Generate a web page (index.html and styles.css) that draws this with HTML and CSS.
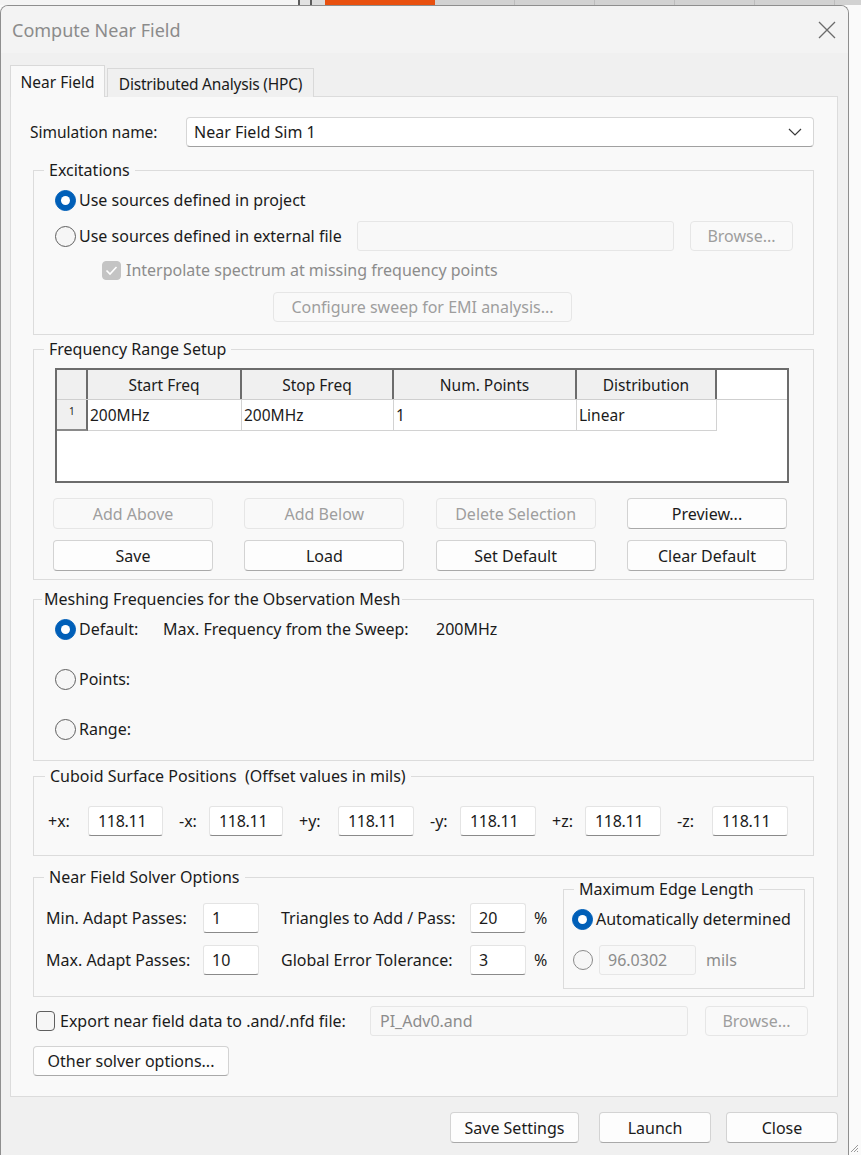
FILE: index.html
```html
<!DOCTYPE html>
<html lang="en">
<head>
    <meta charset="UTF-8">
    <title>Compute Near Field</title>
    <link rel="stylesheet" href="styles.css">
</head>
<body>
    <!-- window behind the dialog -->
    <div class="backdrop">
        <span class="bd bd-light"></span>
        <span class="bd bd-line"></span>
        <span class="bd bd-gap"></span>
        <span class="bd bd-line"></span>
        <span class="bd bd-gap2"></span>
        <span class="bd bd-orange"></span>
        <span class="bd bd-grey"></span>
    </div>

    <div class="dialog">
        <div class="titlebar">
            <span class="title">Compute Near Field</span>
            <svg class="close" width="18" height="18" viewBox="0 0 18 18">
                <path d="M1 1 L17 17 M17 1 L1 17" stroke="#6b6b6b" stroke-width="1.3" fill="none"/>
            </svg>
        </div>

        <div class="client">
            <div class="tabs">
                <div class="tab active">Near Field</div>
                <div class="tab">Distributed Analysis (HPC)</div>
            </div>

            <div class="panel">
                <div class="sim-row">
                    <span class="sim-label">Simulation name:</span>
                    <div class="select">
                        <span>Near Field Sim 1</span>
                        <svg width="14" height="8" viewBox="0 0 14 8">
                            <path d="M1 1 L7 7 L13 1" stroke="#3a3a3a" stroke-width="1.2" fill="none"/>
                        </svg>
                    </div>
                </div>

                <!-- Excitations -->
                <div class="group excitations">
                    <span class="legend">Excitations</span>
                    <div class="row">
                        <span class="radio on"></span>
                        <span>Use sources defined in project</span>
                    </div>
                    <div class="row row-file">
                        <span class="radio"></span>
                        <span class="grow">Use sources defined in external file</span>
                        <span class="field off file-path"></span>
                        <span class="btn off browse">Browse...</span>
                    </div>
                    <div class="row row-check">
                        <span class="check on-off">
                            <svg width="13" height="11" viewBox="0 0 13 11">
                                <path d="M1.5 5.5 L5 9 L11.5 2" stroke="#fff" stroke-width="1.6" fill="none"/>
                            </svg>
                        </span>
                        <span class="dim">Interpolate spectrum at missing frequency points</span>
                    </div>
                    <div class="btn off configure">Configure sweep for EMI analysis...</div>
                </div>

                <!-- Frequency range -->
                <div class="group freq">
                    <span class="legend">Frequency Range Setup</span>
                    <div class="grid">
                        <div class="grid-head">
                            <span class="corner"></span>
                            <span class="hcell">Start Freq</span>
                            <span class="hcell">Stop Freq</span>
                            <span class="hcell">Num. Points</span>
                            <span class="hcell">Distribution</span>
                            <span class="hcell last"></span>
                        </div>
                        <div class="grid-row">
                            <span class="rowhead">1</span>
                            <span class="cell">200MHz</span>
                            <span class="cell">200MHz</span>
                            <span class="cell">1</span>
                            <span class="cell">Linear</span>
                            <span class="cell last"></span>
                        </div>
                    </div>
                    <div class="btn-row">
                        <span class="btn off">Add Above</span>
                        <span class="btn off">Add Below</span>
                        <span class="btn off">Delete Selection</span>
                        <span class="btn">Preview...</span>
                    </div>
                    <div class="btn-row second">
                        <span class="btn">Save</span>
                        <span class="btn">Load</span>
                        <span class="btn">Set Default</span>
                        <span class="btn">Clear Default</span>
                    </div>
                </div>

                <!-- Meshing frequencies -->
                <div class="group meshing">
                    <span class="legend">Meshing Frequencies for the Observation Mesh</span>
                    <div class="row mesh-row">
                        <span class="radio on"></span>
                        <span class="mesh-label">Default:</span>
                        <span class="mesh-desc">Max. Frequency from the Sweep:</span>
                        <span>200MHz</span>
                    </div>
                    <div class="row mesh-row">
                        <span class="radio"></span>
                        <span>Points:</span>
                    </div>
                    <div class="row mesh-row">
                        <span class="radio"></span>
                        <span>Range:</span>
                    </div>
                </div>

                <!-- Cuboid offsets -->
                <div class="group cuboid">
                    <span class="legend">Cuboid Surface Positions&nbsp; (Offset values in mils)</span>
                    <div class="offsets">
                        <span class="off-label">+x:</span><span class="field num">118.11</span>
                        <span class="off-label">-x:</span><span class="field num">118.11</span>
                        <span class="off-label">+y:</span><span class="field num">118.11</span>
                        <span class="off-label">-y:</span><span class="field num">118.11</span>
                        <span class="off-label">+z:</span><span class="field num">118.11</span>
                        <span class="off-label">-z:</span><span class="field num">118.11</span>
                    </div>
                </div>

                <!-- Solver options -->
                <div class="group solver">
                    <span class="legend">Near Field Solver Options</span>
                    <div class="solver-grid">
                        <span>Min. Adapt Passes:</span>
                        <span class="field small">1</span>
                        <span class="mid-label">Triangles to Add / Pass:</span>
                        <span class="field small">20</span>
                        <span class="pct">%</span>

                        <div class="group edge">
                            <span class="legend">Maximum Edge Length</span>
                            <div class="row edge-row">
                                <span class="radio on"></span>
                                <span>Automatically determined</span>
                            </div>
                            <div class="row edge-row2">
                                <span class="radio"></span>
                                <span class="field off edge-val">96.0302</span>
                                <span class="dim mils">mils</span>
                            </div>
                        </div>

                        <span>Max. Adapt Passes:</span>
                        <span class="field small">10</span>
                        <span class="mid-label">Global Error Tolerance:</span>
                        <span class="field small">3</span>
                        <span class="pct">%</span>
                    </div>
                </div>

                <div class="row export-row">
                    <span class="check"></span>
                    <span class="grow">Export near field data to .and/.nfd file:</span>
                    <span class="field off export-path">PI_Adv0.and</span>
                    <span class="btn off browse">Browse...</span>
                </div>

                <div class="btn other">Other solver options...</div>
            </div>

            <div class="footer">
                <span class="btn save-settings">Save Settings</span>
                <span class="btn launch">Launch</span>
                <span class="btn close-btn">Close</span>
            </div>
        </div>
    </div>

    <!-- size grip in the lower right corner -->
    <svg class="grip" width="10" height="10" viewBox="0 0 10 10">
        <path d="M9 2 L2 9 M9 5 L5 9 M9 8 L8 9" stroke="#9a9a9a" stroke-width="1" fill="none"/>
    </svg>
</body>
</html>
```

FILE: styles.css
```css
* {
    box-sizing: border-box;
}
body {
    margin: 0;
    width: 861px;
    height: 1155px;
    overflow: hidden;
    position: relative;
    background-color: #fafafa;
    font-family: "Noto Sans", "Open Sans", sans-serif;
    font-size: 16px;
    color: #1b1b1b;
}

/* strip of the main window peeking above */
.backdrop {
    display: flex;
    height: 5px;
}
.bd-light { width: 298px; background-color: #f4f4f4; }
.bd-line { width: 2px; background-color: #5c5c5c; }
.bd-gap { width: 10px; background-color: #e2e2e2; }
.bd-gap2 { width: 13px; background-color: #dcdcdc; }
.bd-orange { width: 110px; background-color: #e8500f; }
.bd-grey {
    flex: 1;
    background-color: #d2d2d2;
    background-image: repeating-linear-gradient(90deg, transparent 0, transparent 79px, #bdbdbd 79px, #bdbdbd 80px);
}

.dialog {
    width: 849px;
    height: 1150px;
    border: 1px solid #8e8e8e;
    border-bottom: none;
    border-radius: 8px 8px 0 0;
    background-color: #f0f0f0;
    display: flex;
    flex-direction: column;
    overflow: hidden;
}
.titlebar {
    height: 47px;
    flex: none;
    background-color: #f3f3f3;
    display: flex;
    align-items: center;
    justify-content: space-between;
    padding: 0 12px 0 11px;
}
.title {
    font-size: 18px;
    color: #8b8b8b;
}
.grip {
    position: absolute;
    right: 2px;
    bottom: 2px;
}

.client {
    padding: 12px 10px 0 9px;
}
.tabs {
    display: flex;
    align-items: flex-end;
    height: 32px;
    position: relative;
    z-index: 2;
}
.tab {
    display: flex;
    align-items: center;
    justify-content: center;
    border: 1px solid #d9d9d9;
    border-bottom: none;
    font-size: 15.5px;
}
.tab.active {
    width: 95px;
    height: 32px;
    background-color: #f9f9f9;
}
.tab:not(.active) {
    width: 207px;
    height: 29px;
    margin-left: 2px;
    background-color: #f0f0f0;
    padding-top: 2px;
    letter-spacing: -0.2px;
}

.panel {
    height: 1001px;
    margin-top: -1px;
    border: 1px solid #dcdcdc;
    background-color: #f9f9f9;
    padding: 20px 23px 0 22px;
}

.sim-row {
    display: flex;
    align-items: center;
    height: 30px;
}
.sim-label {
    width: 156px;
    margin-left: -3px;
    font-size: 15.5px;
}
.select {
    flex: 1;
    height: 30px;
    display: flex;
    align-items: center;
    justify-content: space-between;
    padding: 0 11px 0 7px;
    background-color: #fff;
    border: 1px solid #d6d6d6;
    border-bottom-color: #a0a0a0;
    border-radius: 4px;
}

/* group boxes */
.group {
    position: relative;
    border: 1px solid #dcdcdc;
}
.legend {
    position: absolute;
    top: -11px;
    left: 10px;
    padding: 0 5px;
    line-height: 20px;
    background-color: #f9f9f9;
    white-space: nowrap;
}
.row {
    display: flex;
    align-items: center;
}
.grow {
    flex: 1;
}
.dim {
    color: #8c8c8c;
}

.radio {
    flex: none;
    width: 21px;
    height: 21px;
    margin-right: 3px;
    border-radius: 50%;
    border: 1px solid #5f5f5f;
    background-color: #f6f6f6;
    position: relative;
}
.radio.on {
    background-color: #005fb8;
    border-color: #005fb8;
}
.radio.on::after {
    content: "";
    position: absolute;
    left: 5px;
    top: 5px;
    width: 9px;
    height: 9px;
    border-radius: 50%;
    background-color: #fff;
}
.check {
    flex: none;
    width: 20px;
    height: 20px;
    margin-right: 5px;
    border: 1px solid #5f5f5f;
    border-radius: 4px;
    background-color: #f6f6f6;
    display: flex;
    align-items: center;
    justify-content: center;
}
.check.on-off {
    width: 19px;
    height: 19px;
    border-color: #c4c4c4;
    background-color: #c4c4c4;
}

.btn {
    height: 30px;
    display: flex;
    align-items: center;
    justify-content: center;
    border: 1px solid #d3d3d3;
    border-bottom-color: #a9a9a9;
    border-radius: 4px;
    background-color: #fdfdfd;
    white-space: nowrap;
}
.btn.off {
    color: #9e9e9e;
    background-color: #f9f9f9;
    border-color: #e6e6e6;
}
.field {
    height: 30px;
    display: flex;
    align-items: center;
    padding-left: 9px;
    background-color: #fff;
    border: 1px solid #e4e4e4;
    border-bottom-color: #8a8a8a;
    border-radius: 3px;
}
.field.off {
    color: #8c8c8c;
    background-color: #f8f8f8;
    border-color: #e6e6e6;
}

/* Excitations */
.excitations {
    margin-top: 23px;
    padding: 14px 20px 12px 21px;
}
.excitations .row {
    height: 30px;
}
.row-file {
    margin-top: 6px;
}
.file-path {
    width: 317px;
}
.browse {
    width: 103px;
    margin-left: 16px;
}
.excitations .row-check {
    height: 24px;
    margin-top: 7px;
    padding-left: 47px;
}
.configure {
    width: 299px;
    margin: 10px 0 0 218px;
}

/* Frequency range table */
.freq {
    margin-top: 14px;
    padding: 18px 24px 8px 21px;
}
.grid {
    height: 115px;
    border: 2px solid #6c6c6c;
    background-color: #fff;
    font-size: 15.5px;
}
.grid-head,
.grid-row {
    display: grid;
    grid-template-columns: 31px 154px 152px 183px 140px 1fr;
}
.grid-head {
    height: 30px;
    background-color: #f0f0f0;
    border-bottom: 1px solid #cfcfcf;
}
.corner {
    border-right: 2px solid #6c6c6c;
}
.hcell {
    display: flex;
    align-items: center;
    justify-content: center;
    border-right: 2px solid #6c6c6c;
}
.hcell.last,
.cell.last {
    border: none;
    background-color: #fff;
}
.grid-row {
    height: 31px;
}
.rowhead {
    background-color: #f0f0f0;
    border-right: 2px solid #6c6c6c;
    border-bottom: 2px solid #8a8a8a;
    font-size: 10px;
    padding: 4px 0 0 12px;
}
.cell {
    display: flex;
    align-items: center;
    padding-left: 2px;
    border-right: 1px solid #d2d2d2;
    border-bottom: 1px solid #d2d2d2;
}
.btn-row {
    display: flex;
    justify-content: space-between;
    margin: 15px 2px 0 -2px;
}
.btn-row.second {
    margin-top: 11px;
}
.btn-row .btn {
    width: 160px;
    height: 31px;
}

/* Meshing frequencies */
.meshing {
    margin-top: 19px;
    height: 162px;
    padding: 17px 0 0 21px;
}
.meshing .legend {
    left: 8px;
    padding: 0 2px;
}
.mesh-row {
    height: 24px;
    margin-bottom: 26px;
}
.mesh-row:nth-of-type(3) {
    margin-bottom: 28px;
}
.mesh-label {
    width: 84px;
}
.mesh-desc {
    width: 273px;
}

/* Cuboid offsets */
.cuboid {
    margin-top: 15px;
    padding: 29px 0 19px 14px;
}
.cuboid .legend {
    left: 11px;
}
.offsets {
    display: grid;
    grid-template-columns: 40px 75px 46px 74px 55px 76px 46px 76px 49px 76px 51px 76px;
    align-items: center;
}
.off-label {
    padding-left: 16px;
}
.off-label:first-child {
    padding-left: 0;
}
.field.num {
    letter-spacing: -0.3px;
}

/* Solver options */
.solver {
    margin-top: 21px;
    height: 120px;
    padding: 25px 0 0 12px;
}
.solver-grid {
    display: grid;
    grid-template-columns: 157px 56px 22px 189px 56px 37px 242px;
    grid-template-rows: 30px 30px;
    row-gap: 12px;
    align-items: center;
}
.solver-grid .field {
    padding-left: 8px;
}
.mid-label {
    grid-column: 4;
}
.pct {
    padding-left: 8px;
}
.group.edge {
    grid-column: 7;
    grid-row: 1 / span 2;
    align-self: stretch;
    margin: -14px 0 -14px 0;
    padding: 17px 0 0 8px;
}
.edge-row {
    height: 24px;
}
.edge-row2 {
    margin-top: 14px;
    padding-left: 1px;
}
.edge-row2 .radio {
    width: 20px;
    height: 20px;
    border-color: #8a8a8a;
}
.edge-val {
    width: 97px;
    margin-left: 3px;
}
.mils {
    margin-left: 10px;
}

/* Export and extra options */
.export-row {
    height: 31px;
    margin: 8px 6px 0 3px;
}
.export-row .check {
    width: 19px;
    margin-right: 5px;
}
.export-path {
    width: 318px;
}
.export-row .browse {
    margin-left: 17px;
}
.other {
    width: 196px;
    margin-top: 10px;
}

.footer {
    display: flex;
    justify-content: flex-end;
    padding: 15px 0 0 0;
}
.footer .btn {
    height: 31px;
    width: 112px;
}
.footer .save-settings {
    width: 129px;
}
.footer .launch {
    margin-left: 20px;
}
.footer .close-btn {
    margin-left: 15px;
}
```
